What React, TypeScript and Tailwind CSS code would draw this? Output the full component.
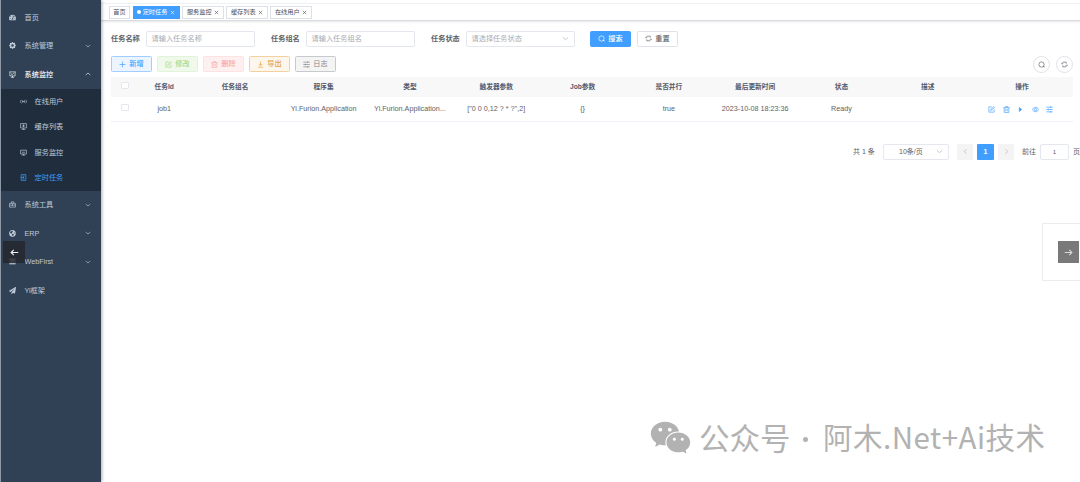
import type { ReactNode } from 'react';
import { AiFillWechat } from 'react-icons/ai';
import { FaTachometerAlt, FaPaperPlane, FaGlobeAmericas } from 'react-icons/fa';
import { BsGearFill } from 'react-icons/bs';

const paths: Record<string, ReactNode> = {
  down: <path d="M3 8l9 8 9-8" />,
  up: <path d="M3 16l9-8 9 8" />,
  left: <path d="M15 5l-7 7 7 7" />,
  right: <path d="M9 5l7 7-7 7" />,
  close: <path d="M4 4l16 16M20 4L4 20" />,
  plus: <path d="M12 2v20M2 12h20" />,
  edit: <path d="M13 3H3v18h18v-9M9 15l1-4 10-9 2 3-9 9z" />,
  trash: <path d="M1 6h22M8 6V2h8v4M4 6v16h16V6M9.500 10v8M14.500 10v8" />,
  download: <path d="M12 2v14M6 10l6 6 6-6M3 21h18" />,
  sliders: <path d="M1 4h22M1 12h22M1 20h22M16 1v6M8 9v6M16 17v6" />,
  search: <path d="M18 19h4M21 12a9 9 0 1 1-18 0 9 9 0 0 1 18 0zM18 18l4 4" />,
  refresh: <path d="M4 9c0-3 3-5 6-5h8v5M20 15c0 3-3 5-6 5H6v-5M1 8l3 3 3-3M23 16l-3-3-3 3" />,
  eye: <path d="M1 12c5-10 17-10 22 0-5 10-17 10-22 0zM16 12a4 4 0 1 1-8 0 4 4 0 0 1 8 0z" />,
  play: <path d="M8 5l8 7-8 7z" fill="currentColor" />,
  monitor: <path d="M1 3h22M3 3v14h18V3M12 17v5M7 22h10M7 9l4 4 6-7" />,
  screen: <path d="M2 4h20v13H2zM6 21h12M12 17v4M7 11h10" />,
  online: <path d="M5 6c-4 4-4 8 0 12M19 6c4 4 4 8 0 12M9 8v8M15 8v8M9 12h6" />,
  cache: <path d="M2 2h20v15H2zM12 17v5M6 22h12M12 5v9M8 8h8M9 12h6" />,
  job: <path d="M20 2H4v20h16zM9 7h7M9 17h7M2 12h11M10 9l4 3-4 3" />,
  toolbox: <path d="M2 8h20v13H2zM8 8V3h8v5M2 14h20M12 11v6" />,
  bars: <path d="M3 4h5v16H3zM10 4h4v16h-4zM16 4h5v16h-5zM1 4h22M1 20h22" />,
  arrowLeft: <path d="M22 12H3M10 5l-7 7 7 7" />,
  arrowRight: <path d="M2 12h19M14 5l7 7-7 7" />,
};

function Icon({ name, className = 'size-[7px]', weight = 2.3 }: { name: string; className?: string; weight?: number }) {
  return (
    <svg viewBox="0 0 24 24" fill="none" stroke="currentColor" strokeWidth={weight} className={`shrink-0 ${className}`}>
      {paths[name]}
    </svg>
  );
}

function MenuItem({ icon, label, arrow, active }: { icon: ReactNode; label: string; arrow?: string; active?: boolean }) {
  return (
    <div className={`flex h-[28.5px] items-center pr-[10px] pl-[8px] ${active ? 'font-medium text-[#f4f4f5]' : 'text-[#bfcbd9]'}`}>
      <span className="flex w-[15.500px] items-center">{icon}</span>
      <span className="flex-1 whitespace-nowrap">{label}</span>
      {arrow && <Icon name={arrow} className="size-[6px]" weight={2.500} />}
    </div>
  );
}

function SubItem({ icon, label, active }: { icon: string; label: string; active?: boolean }) {
  return (
    <div className={`flex h-[25.500px] items-center pl-[18.500px] ${active ? 'text-[#409eff]' : 'text-[#bfcbd9]'}`}>
      <Icon name={icon} />
      <span className="ml-[8px]">{label}</span>
    </div>
  );
}

function Sidebar() {
  return (
    <aside className="relative h-full w-[101px] shrink-0 border-l border-[#8f99a5] bg-[#304156] pt-[3px] text-[7.200px] shadow-[1px_0_3px_rgba(0,21,41,0.35)]">
      <MenuItem icon={<FaTachometerAlt className="size-[7px]" />} label="首页" />
      <MenuItem icon={<BsGearFill className="size-[7px]" />} label="系统管理" arrow="down" />
      <MenuItem icon={<Icon name="monitor" className="size-[7px]" />} label="系统监控" arrow="up" active />
      <div className="bg-[#1f2d3d]">
        <SubItem icon="online" label="在线用户" />
        <SubItem icon="cache" label="缓存列表" />
        <SubItem icon="screen" label="服务监控" />
        <SubItem icon="job" label="定时任务" active />
      </div>
      <MenuItem icon={<Icon name="toolbox" />} label="系统工具" arrow="down" />
      <MenuItem icon={<FaGlobeAmericas className="size-[7px]" />} label="ERP" arrow="down" />
      <MenuItem icon={<Icon name="bars" />} label="WebFirst" arrow="down" />
      <MenuItem icon={<FaPaperPlane className="size-[7px]" />} label="Yi框架" />
      <div className="absolute top-[241px] left-[2px] flex h-[22px] w-[22px] items-center justify-center bg-[#24262b]/80 text-[#f0f1f2]">
        <Icon name="arrowLeft" className="size-[9px]" weight={3} />
      </div>
    </aside>
  );
}

function Tabs() {
  const tabs = ['服务监控', '缓存列表', '在线用户'];
  return (
    <nav className="mt-[3px] flex h-[18px] shrink-0 items-center gap-[2.500px] border-t border-b border-t-[#f0f1f3] border-b-[#d9dce1] pl-[8px] text-[6.200px] text-[#495060] shadow-[0_1px_2px_rgba(0,0,0,0.1)]">
      <div className="flex h-[13px] w-[21px] items-center justify-center border border-[#dce0e8]">首页</div>
      <div className="flex h-[13px] w-[47px] items-center justify-center bg-[#409eff] text-white">
        <span className="mr-[1.500px] size-[4px] rounded-full bg-white" />
        定时任务
        <Icon name="close" className="ml-[2.500px] size-[5px]" weight={3} />
      </div>
      {tabs.map((t) => (
        <div key={t} className="flex h-[13px] w-[41.500px] items-center justify-center border border-[#dce0e8]">
          {t}
          <Icon name="close" className="ml-[2px] size-[5px]" weight={3} />
        </div>
      ))}
    </nav>
  );
}

function Field({ label, placeholder, select }: { label: string; placeholder: string; select?: boolean }) {
  return (
    <div className="flex h-[16px] w-[160px] items-center">
      <span className="w-[34.500px] font-bold text-[#606266]">{label}</span>
      <div className="flex h-[16px] w-[109px] items-center justify-between rounded-[2px] border border-[#e4e7ed] px-[5px] text-[#a8abb2]">
        {placeholder}
        {select && <Icon name="down" className="size-[7px]" />}
      </div>
    </div>
  );
}

function Button({ icon, label, tone }: { icon: string; label: string; tone: string }) {
  return (
    <div className={`flex h-[16px] w-[41px] shrink-0 items-center justify-center gap-[3px] rounded-[1.500px] border ${tone}`}>
      <Icon name={icon} />
      <span>{label}</span>
    </div>
  );
}

const grid = 'grid grid-cols-[28px_50.500px_91px_repeat(8,86.300px)_1fr] items-center text-center';
const headers = ['任务Id', '任务组名', '程序集', '类型', '触发器参数', 'Job参数', '是否并行', '最后更新时间', '状态', '描述', '操作'];
const row = ['job1', '', 'Yi.Furion.Application', 'Yi.Furion.Application...', '["0 0 0,12 ? * ?",2]', '{}', 'true', '2023-10-08 18:23:36', 'Ready', ''];

function Table() {
  const box = <span className="mx-auto mb-[2px] block size-[7.500px] rounded-[1px] border border-[#e4e7ed] bg-white" />;
  return (
    <section className="mt-[4px] w-[962px] text-[#606266]">
      <div className={`${grid} h-[20px] bg-[#f8f8f9] font-bold text-[#515a6e]`}>
        {box}
        {headers.map((h) => <span key={h} className="pt-px text-[6.700px]">{h}</span>)}
      </div>
      <div className={`${grid} h-[25px] border-b border-[#f0f2f7]`}>
        {box}
        {row.map((c, i) => <span key={i} className="whitespace-nowrap">{c}</span>)}
        <span className="flex justify-center gap-[7.500px] pt-px pr-[2px] text-[#409eff]">
          <Icon name="edit" /><Icon name="trash" /><Icon name="play" /><Icon name="eye" /><Icon name="sliders" />
        </span>
      </div>
    </section>
  );
}

function Pagination() {
  return (
    <div className="mt-[22px] ml-[742px] flex h-[16px] items-center whitespace-nowrap text-[7px] text-[#606266]">
      <span className="w-[30px]">共 1 条</span>
      <div className="flex h-[16px] w-[66px] items-center justify-between rounded-[2px] border border-[#e4e7ed] pr-[5px] pl-[15px]">
        10条/页<Icon name="down" className="size-[7px] text-[#a8abb2]" />
      </div>
      <div className="ml-[8px] flex size-[16px] items-center justify-center bg-[#f4f4f5] text-[#a8abb2]"><Icon name="left" /></div>
      <div className="ml-[4px] flex h-[16px] w-[17px] items-center justify-center rounded-[1px] bg-[#409eff] font-bold text-white">1</div>
      <div className="ml-[4px] flex size-[16px] items-center justify-center bg-[#f4f4f5] text-[#a8abb2]"><Icon name="right" /></div>
      <span className="ml-[8px] w-[18px]">前往</span>
      <div className="flex h-[16px] w-[29px] items-center justify-center rounded-[2px] border border-[#e4e7ed] text-[6px]">1</div>
      <span className="ml-[4px]">页</span>
    </div>
  );
}

export default function App() {
  return (
    <div className="relative flex h-[482px] w-[1080px] overflow-hidden bg-white font-['Liberation_Sans','Noto_Sans_CJK_SC',sans-serif] text-[7.200px] leading-none">
      <Sidebar />
      <main className="flex min-w-0 flex-1 flex-col">
        <Tabs />
        <div className="pt-[9.500px] pl-[10px]">
          <div className="flex items-center">
            <Field label="任务名称" placeholder="请输入任务名称" />
            <Field label="任务组名" placeholder="请输入任务组名" />
            <Field label="任务状态" placeholder="请选择任务状态" select />
            <div className="-ml-px flex gap-[6px]">
              <Button icon="search" label="搜索" tone="border-[#409eff] bg-[#409eff] font-medium text-white" />
              <Button icon="refresh" label="重置" tone="border-[#dfe2e8] bg-white font-medium text-[#606266]" />
            </div>
          </div>
          <div className="mt-[9px] flex w-[962px] items-center gap-[5px]">
            <Button icon="plus" label="新增" tone="border-[#a0cfff] bg-[#ecf5ff] font-medium text-[#409eff]" />
            <Button icon="edit" label="修改" tone="border-[#e1f3d8] bg-[#f0f9eb] font-medium text-[#a4da89]" />
            <Button icon="trash" label="删除" tone="border-[#fde2e2] bg-[#fef0f0] font-medium text-[#f9a7a7]" />
            <Button icon="download" label="导出" tone="border-[#f3d19e] bg-[#fdf6ec] font-medium text-[#e6a23c]" />
            <Button icon="sliders" label="日志" tone="border-[#c8c9cc] bg-[#f4f4f5] text-[#85878c]" />
            <div className="ml-auto flex gap-[6px] text-[#606266]">
              <span className="flex size-[17px] items-center justify-center rounded-full border border-[#dfe2e8]"><Icon name="search" /></span>
              <span className="flex size-[17px] items-center justify-center rounded-full border border-[#dfe2e8]"><Icon name="refresh" /></span>
            </div>
          </div>
          <Table />
          <Pagination />
        </div>
      </main>
      <div className="absolute top-[223px] left-[1042px] flex h-[58px] w-[39px] items-center border border-[#ededed] bg-white pl-[15px]">
        <div className="flex h-[22px] w-[21px] items-center justify-center bg-[#797979] text-[#d8d8d8]">
          <Icon name="arrowRight" className="size-[9px]" weight={3} />
        </div>
      </div>
      <div className="absolute top-[416px] left-[648px] flex h-[42px] items-center font-['Noto_Sans_CJK_SC',sans-serif] whitespace-nowrap text-[#b2b2b2]">
        <AiFillWechat className="size-[45px]" />
        <span className="ml-[6px] w-[93px] text-[30.500px]">公众号</span>
        <span className="mt-[5px] mr-[10px] ml-[11px] size-[5px] rounded-full bg-[#b2b2b2]" />
        <span className="ml-[5px] text-[29.500px] tracking-[0.500px]">阿木.Net+Ai技术</span>
      </div>
    </div>
  );
}
